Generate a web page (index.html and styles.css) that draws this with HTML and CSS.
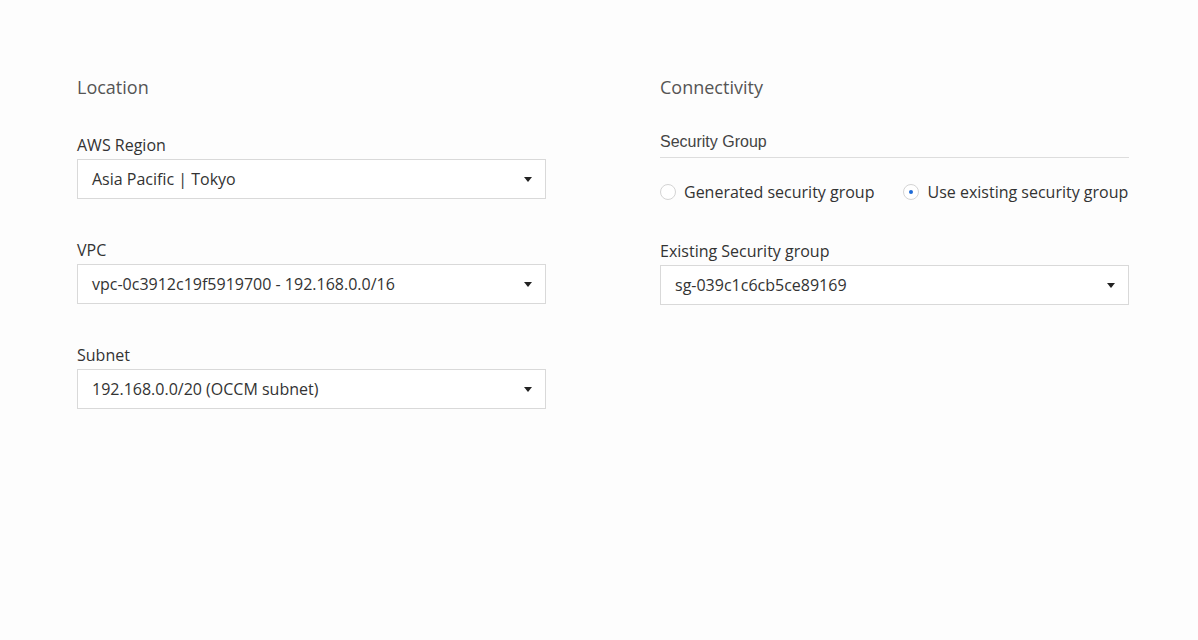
FILE: index.html
```html
<!DOCTYPE html>
<html>
<head>
<meta charset="utf-8">
<link rel="stylesheet" href="styles.css">
</head>
<body>
<div class="page">
  <section class="col">
    <h2 class="heading">Location</h2>
    <div class="field first">
      <div class="label">AWS Region</div>
      <div class="select"><span>Asia Pacific | Tokyo</span><i class="caret"></i></div>
    </div>
    <div class="field">
      <div class="label">VPC</div>
      <div class="select"><span>vpc-0c3912c19f5919700 - 192.168.0.0/16</span><i class="caret"></i></div>
    </div>
    <div class="field">
      <div class="label">Subnet</div>
      <div class="select"><span>192.168.0.0/20 (OCCM subnet)</span><i class="caret"></i></div>
    </div>
  </section>
  <section class="col">
    <h2 class="heading">Connectivity</h2>
    <div class="group-title">Security Group</div>
    <div class="radios">
      <label class="radio"><span class="dot"></span>Generated security group</label>
      <label class="radio checked"><span class="dot"></span>Use existing security group</label>
    </div>
    <div class="field sg">
      <div class="label">Existing Security group</div>
      <div class="select"><span>sg-039c1c6cb5ce89169</span><i class="caret"></i></div>
    </div>
  </section>
</div>
</body>
</html>
```
FILE: styles.css
```css
html, body {
  margin: 0;
  padding: 0;
  background: #fdfdfd;
}
body {
  font-family: "Open Sans", "Liberation Sans", sans-serif;
  color: #333;
}
.page {
  display: flex;
  gap: 114px;
  padding: 75px 0 0 77px;
}
.col {
  width: 469px;
  display: flex;
  flex-direction: column;
}
.heading {
  margin: 0;
  font-size: 18px;
  font-weight: 400;
  line-height: 24px;
  color: #555;
}
.field {
  margin-top: 40px;
}
.field.first {
  margin-top: 35px;
}
.label {
  font-size: 16px;
  line-height: 22px;
  color: #333;
  margin-bottom: 3px;
}
.select {
  height: 40px;
  box-sizing: border-box;
  border: 1px solid #d9d9d9;
  background: #fff;
  display: flex;
  align-items: center;
  justify-content: space-between;
  padding: 0 13px 0 14px;
  font-size: 16px;
  color: #333;
}
.caret {
  width: 0;
  height: 0;
  border-left: 4.5px solid transparent;
  border-right: 4.5px solid transparent;
  border-top: 5px solid #222;
}
.group-title {
  margin-top: 33px;
  font-family: "Liberation Sans", Arial, sans-serif;
  font-size: 16px;
  line-height: 20px;
  color: #444;
  padding-bottom: 5px;
  border-bottom: 1px solid #ddd;
}
.radios {
  display: flex;
  gap: 29px;
  margin-top: 22px;
  height: 24px;
  align-items: center;
  white-space: nowrap;
}
.radio {
  display: flex;
  align-items: center;
  flex-shrink: 0;
  font-size: 16px;
  color: #333;
}
.dot {
  flex-shrink: 0;
  width: 14px;
  height: 14px;
  border: 1px solid #d4d4d4;
  border-radius: 50%;
  background: #fff;
  margin-right: 8px;
  position: relative;
  box-sizing: content-box;
}
.radio.checked .dot::after {
  content: "";
  position: absolute;
  left: 5px;
  top: 5px;
  width: 4px;
  height: 4px;
  border-radius: 50%;
  background: #1d6ad6;
}
.field.sg {
  margin-top: 36px;
}
```
